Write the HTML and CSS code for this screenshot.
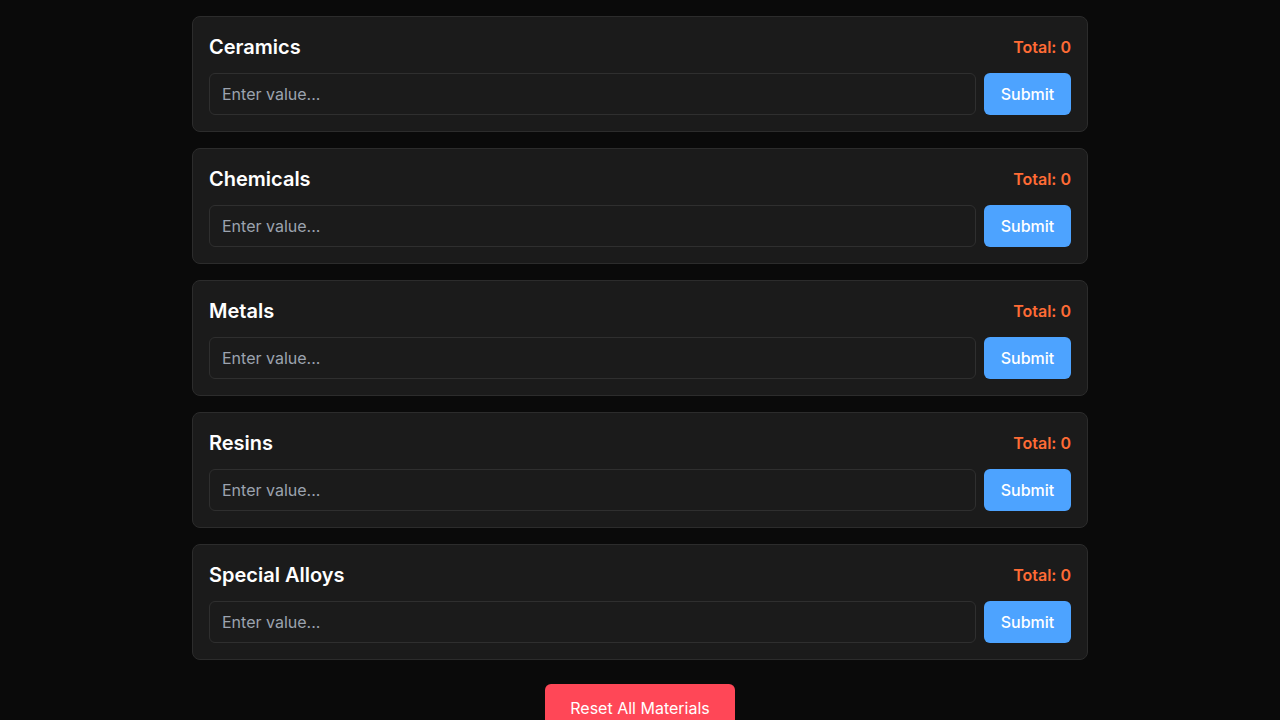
FILE: index.html
```html
<!DOCTYPE html>
<html lang="en">
<head>
<meta charset="utf-8">
<title>Materials</title>
<link rel="stylesheet" href="styles.css">
</head>
<body>
<main class="container">
  <section class="card">
    <div class="card-head"><h2 class="title">Ceramics</h2><span class="total">Total: 0</span></div>
    <div class="row"><input class="field" type="text" placeholder="Enter value..."><button class="submit">Submit</button></div>
  </section>
  <section class="card">
    <div class="card-head"><h2 class="title">Chemicals</h2><span class="total">Total: 0</span></div>
    <div class="row"><input class="field" type="text" placeholder="Enter value..."><button class="submit">Submit</button></div>
  </section>
  <section class="card">
    <div class="card-head"><h2 class="title">Metals</h2><span class="total">Total: 0</span></div>
    <div class="row"><input class="field" type="text" placeholder="Enter value..."><button class="submit">Submit</button></div>
  </section>
  <section class="card">
    <div class="card-head"><h2 class="title">Resins</h2><span class="total">Total: 0</span></div>
    <div class="row"><input class="field" type="text" placeholder="Enter value..."><button class="submit">Submit</button></div>
  </section>
  <section class="card">
    <div class="card-head"><h2 class="title">Special Alloys</h2><span class="total">Total: 0</span></div>
    <div class="row"><input class="field" type="text" placeholder="Enter value..."><button class="submit">Submit</button></div>
  </section>
  <div class="actions"><button class="reset">Reset All Materials</button></div>
</main>
</body>
</html>
```
FILE: styles.css
```css
* { box-sizing: border-box; }
html, body { margin: 0; padding: 0; background: #0a0a0a; }
body { font-family: Inter, "Noto Sans", sans-serif; color: #fff; }
.container {
  width: 896px;
  margin: 0 auto;
  padding-top: 16px;
  display: flex;
  flex-direction: column;
  gap: 16px;
}
.card {
  background: #1b1b1b;
  border: 1px solid #2c2c2c;
  border-radius: 8px;
  padding: 16px;
  display: flex;
  flex-direction: column;
  gap: 12px;
}
.card-head {
  display: flex;
  justify-content: space-between;
  align-items: center;
  height: 28px;
}
.title { margin: 0; font-size: 20px; font-weight: 600; line-height: 28px; color: #fff; }
.total { font-size: 16px; font-weight: 600; color: #ff6b35; }
.row { display: flex; gap: 8px; }
.field {
  flex: 1;
  height: 42px;
  background: #1b1b1b;
  border: 1px solid #2f2f2f;
  border-radius: 6px;
  padding: 0 12px;
  font-family: inherit;
  font-size: 16px;
  color: #fff;
  outline: none;
}
.field::placeholder { color: #9ca3af; }
.submit {
  height: 42px;
  width: 87px;
  background: #4da3ff;
  border: none;
  border-radius: 6px;
  color: #fff;
  font-family: inherit;
  font-size: 16px;
  font-weight: 500;
}
.actions { display: flex; justify-content: center; padding-top: 8px; }
.reset {
  width: 190px;
  height: 48px;
  background: #ff4757;
  border: none;
  border-radius: 6px;
  color: #fff;
  font-family: inherit;
  font-size: 16px;
  font-weight: 400;
}
```
